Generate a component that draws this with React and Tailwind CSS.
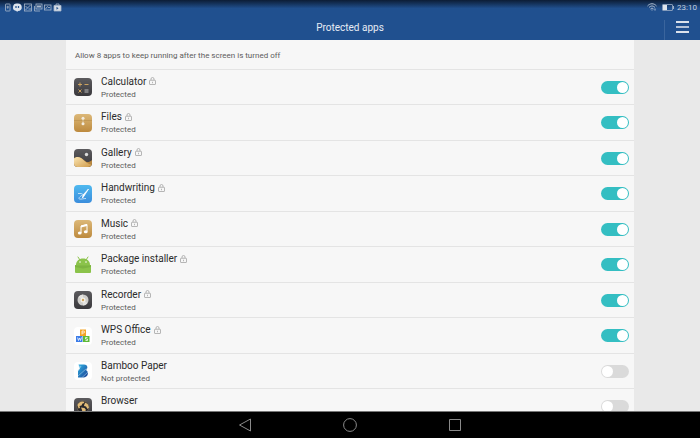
import React, { useState } from 'react';

const initialApps = [
  { id: 'calculator', name: 'Calculator', icon: CalculatorIcon, locked: true, enabled: true },
  { id: 'files', name: 'Files', icon: FilesIcon, locked: true, enabled: true },
  { id: 'gallery', name: 'Gallery', icon: GalleryIcon, locked: true, enabled: true },
  { id: 'handwriting', name: 'Handwriting', icon: HandwritingIcon, locked: true, enabled: true },
  { id: 'music', name: 'Music', icon: MusicIcon, locked: true, enabled: true },
  { id: 'installer', name: 'Package installer', icon: InstallerIcon, locked: true, enabled: true },
  { id: 'recorder', name: 'Recorder', icon: RecorderIcon, locked: true, enabled: true },
  { id: 'wps', name: 'WPS Office', icon: WpsIcon, locked: true, enabled: true },
  { id: 'bamboo', name: 'Bamboo Paper', icon: BambooIcon, locked: false, enabled: false },
  { id: 'browser', name: 'Browser', icon: BrowserIcon, locked: false, enabled: false },
];

// Gradients shared by the launcher icons
function IconDefs() {
  return (
    <svg className="absolute h-0 w-0" aria-hidden="true">
      <defs>
        <linearGradient id="dark" x1="0" y1="0" x2="0" y2="1">
          <stop offset="0" stopColor="#5c5b5e" />
          <stop offset="1" stopColor="#39383c" />
        </linearGradient>
        <linearGradient id="gold" x1="0" y1="0" x2="0" y2="1">
          <stop offset="0" stopColor="#dcb878" />
          <stop offset="1" stopColor="#bd8a3e" />
        </linearGradient>
        <linearGradient id="sand" x1="0" y1="0" x2="1" y2="1">
          <stop offset="0" stopColor="#fbe6b4" />
          <stop offset="1" stopColor="#cf9a48" />
        </linearGradient>
        <linearGradient id="sky" x1="0" y1="0" x2="0" y2="1">
          <stop offset="0" stopColor="#4fb9ef" />
          <stop offset="1" stopColor="#3b8ddc" />
        </linearGradient>
        <linearGradient id="bamboo" x1="0" y1="0" x2="1" y2="1">
          <stop offset="0" stopColor="#2eb2e4" />
          <stop offset="1" stopColor="#1d3f94" />
        </linearGradient>
      </defs>
    </svg>
  );
}

function Tile({ fill, children }) {
  return (
    <svg viewBox="0 0 36 36" className="h-[18px] w-[18px] shrink-0" aria-hidden="true">
      <rect width="36" height="36" rx="8" fill={fill} />
      {children}
    </svg>
  );
}

function CalculatorIcon() {
  return (
    <Tile fill="url(#dark)">
      <path d="M8 13h8M12 9v8M9 23l6 6M15 23l-6 6" stroke="#d9ab62" strokeWidth="1.8" />
      <path d="M21 13h8" stroke="#d9ab62" strokeWidth="1.8" />
      <path d="M21 24h8M21 28h8" stroke="#c9c9c9" strokeWidth="1.8" />
    </Tile>
  );
}

function FilesIcon() {
  return (
    <Tile fill="url(#gold)">
      <path d="M0 13h36" stroke="#b58a48" strokeWidth="1" />
      <path d="M18 9v11" stroke="#d9c49c" strokeWidth="2" />
      <circle cx="18" cy="8.5" r="3" fill="#f3ece0" />
      <circle cx="18" cy="19.5" r="3" fill="#f3ece0" />
    </Tile>
  );
}

function GalleryIcon() {
  return (
    <Tile fill="url(#dark)">
      <circle cx="25" cy="11" r="3.4" fill="#dcdcdc" />
      <path d="M0 19c4-4 9-4 14-1 7 4 9 8 13 8 3 0 6-1 9-4v6a8 8 0 0 1-8 8H8a8 8 0 0 1-8-8z" fill="#b98840" />
      <path d="M0 19c4-4 9-4 14-1 6 4 11 12 21 13a8 8 0 0 1-7 5H8a8 8 0 0 1-8-8z" fill="url(#sand)" />
    </Tile>
  );
}

function HandwritingIcon() {
  return (
    <Tile fill="url(#sky)">
      <path d="M29 8 20 22l-3 4 1-6z" fill="#fff" stroke="#fff" strokeWidth="1.6" />
      <path d="M8 17h7c3 0 2 3-1 5s-6 5-3 6 8-1 13-1" fill="none" stroke="#d4e9fa" strokeWidth="1.7" />
    </Tile>
  );
}

function MusicIcon() {
  return (
    <Tile fill="url(#gold)">
      <path d="M14 26V12l12-3v14" fill="none" stroke="#fff" strokeWidth="2" />
      <path d="M14 11l12-3v4l-12 3z" fill="#fff" />
      <ellipse cx="11.5" cy="26" rx="3.8" ry="3" fill="#fff" />
      <ellipse cx="23.5" cy="23.5" rx="3.8" ry="3" fill="#fff" />
    </Tile>
  );
}

function InstallerIcon() {
  return (
    <svg viewBox="0 0 36 36" className="h-[18px] w-[18px] shrink-0" aria-hidden="true">
      <path d="M8 2l4 6M28 2l-4 6" stroke="#8bc34a" strokeWidth="2" strokeLinecap="round" />
      <path d="M4 18C4 10 10 5 18 5s14 5 14 13z" fill="#8bc34a" />
      <circle cx="12" cy="12" r="1.6" fill="#fff" />
      <circle cx="24" cy="12" r="1.6" fill="#fff" />
      <path d="M2 18h32v14a2 2 0 0 1-2 2H4a2 2 0 0 1-2-2z" fill="#8bc34a" />
      <path d="M2 19h32v3L18 25 2 22z" fill="#7db441" />
    </svg>
  );
}

function RecorderIcon() {
  return (
    <Tile fill="url(#dark)">
      <circle cx="18" cy="18" r="11" fill="#cfcecb" />
      <path d="M18 18 9 12a11 11 0 0 1 9-5zM18 18l9 6a11 11 0 0 1-9 5z" fill="#e4e3e0" />
      <circle cx="18" cy="18" r="5" fill="#f5f2ea" />
      <circle cx="18" cy="18" r="2.4" fill="#cfa45c" />
    </Tile>
  );
}

function WpsIcon() {
  return (
    <Tile fill="#fff">
      <rect x="12" y="5" width="12" height="13" fill="#f3a325" />
      <rect x="4" y="18" width="13" height="12" fill="#3d7de8" />
      <rect x="18" y="18" width="13" height="12" fill="#5cba36" />
      <path d="M16 15V8h3a2 2 0 0 1 0 4h-3M7 21l2 6 2-5 2 5 2-6M27 21h-4v3h4v3h-4" fill="none" stroke="#fff" strokeWidth="1.5" />
    </Tile>
  );
}

function BambooIcon() {
  return (
    <Tile fill="#fff">
      <path d="M9 5h11c7 0 9 7 4 11 7 4 4 15-5 15H8V18l4-5z" fill="url(#bamboo)" />
      <path d="M8 17 14 9 9 8M8 28l17-15M15 32l13-12" fill="none" stroke="#b9e2f5" strokeWidth="1" />
    </Tile>
  );
}

function BrowserIcon() {
  return (
    <Tile fill="url(#dark)">
      <circle cx="18" cy="18" r="12" fill="#29282b" stroke="#8f7c5c" strokeWidth="1" />
      <path d="M7 14c2-5 7-8 12-7l2 3-4 1-2 4-4 1 1 4-3 1zM23 9l5 4 2 6-3 3-3-5-4-1 1-4zM14 19l7 1 3 4-4 5h-3l-1-5z" fill="#e3bd79" />
    </Tile>
  );
}

function LockIcon() {
  return (
    <svg viewBox="0 0 14 16" className="h-2 w-[7px] shrink-0" fill="none" stroke="#a5a5a5" strokeWidth="1.6" aria-label="Locked">
      <rect x="1" y="6.5" width="12" height="8.5" rx="1" />
      <path d="M4 6V4a3 3 0 0 1 6 0v2M7 9.5v3" />
    </svg>
  );
}

function NotificationIcons() {
  return (
    <svg viewBox="0 0 116 18" className="h-[9px] w-[58px]" fill="none" stroke="#a9b7ca" strokeWidth="1.6" aria-hidden="true">
      <rect x="3" y="2" width="9" height="14" rx="1" />
      <path d="M7.5 5.5v6M5 8h5" />
      <path d="M27 1a8 7.5 0 0 1 1 15l-2 2-1-2a8 7.5 0 0 1 2-15z" fill="#dde4ed" stroke="none" />
      <path d="M24 6v4M29 6v4" stroke="#27548e" strokeWidth="2.5" />
      <rect x="41" y="2" width="14" height="14" />
      <path d="M43 14l10-10M43 6l4 4M49 12h5" />
      <path d="M61 6v10h11" />
      <rect x="64" y="2" width="12" height="10" />
      <path d="M66 7h8" strokeWidth="4" />
      <rect x="81" y="4" width="13" height="10" />
      <path d="M83 12l4-5 3 3 2-2" />
      <path d="M100 5h14v11h-14z" fill="#d5dce6" />
      <path d="M104 5V2h6v3" />
      <path d="M105 7.5v6l4-3z" fill="#27548e" stroke="none" />
    </svg>
  );
}

function StatusBar() {
  return (
    <div className="flex h-[14px] items-center justify-between bg-linear-to-b from-[#0c1d36] to-[#20508f] to-60% pr-[3px] pl-1">
      <NotificationIcons />
      <div className="flex items-center gap-[3px] text-[#c3cedd]">
        <svg viewBox="0 0 20 16" className="mr-0.5 h-2 w-2.5" fill="none" stroke="currentColor" strokeWidth="1.8" aria-label="Wi-Fi">
          <path d="M1 6c5-6 13-6 18 0M4 9c4-4 8-4 12 0M7 12c2-2 4-2 6 0" />
          <path d="M10 15v-2M16 11v4" />
        </svg>
        <svg viewBox="0 0 24 14" className="h-[7px] w-3" aria-label="Battery">
          <rect x="1" y="1" width="20" height="12" rx="1" fill="none" stroke="#9dafc7" strokeWidth="1.6" />
          <path d="M2 2h8v10H2z" fill="#dfe5ed" />
          <path d="M23 4v6" stroke="#9dafc7" strokeWidth="2" />
        </svg>
        <span className="pt-px text-[8px] leading-none">23:10</span>
      </div>
    </div>
  );
}

function AppRow({ app, onToggle }) {
  const Icon = app.icon;
  return (
    <li className="border-b border-[#e4e4e4] odd:h-[35px] even:h-9">
      <label htmlFor={app.id} className="flex h-full items-center pr-[5px] pl-2">
        <Icon />
        <div className="ml-[9px] flex-1 pt-px">
          <div className="flex items-center gap-[3px]">
            <span className="text-[10px] leading-[13px] text-[#2b2b2b]">{app.name}</span>
            {app.locked && <LockIcon />}
          </div>
          <p className="text-[8px] leading-[13px] text-[#5c5c5c]">{app.enabled ? 'Protected' : 'Not protected'}</p>
        </div>
        <input
          id={app.id}
          type="checkbox"
          role="switch"
          checked={app.enabled}
          onChange={() => onToggle(app.id)}
          className="flex h-[13px] w-7 appearance-none items-center rounded-full bg-[#dadada] px-px before:h-[11px] before:w-[11px] before:rounded-full before:bg-white before:content-[''] checked:justify-end checked:bg-[#34bec2]"
        />
      </label>
    </li>
  );
}

export default function App() {
  const [apps, setApps] = useState(initialApps);

  const handleToggle = (id) => {
    setApps(apps.map((app) => (app.id === id ? { ...app, enabled: !app.enabled } : app)));
  };

  return (
    <div className="flex h-screen flex-col overflow-hidden bg-[#e9e9e9] font-['Roboto',sans-serif]">
      <IconDefs />
      <header className="shrink-0 bg-[#20508f]">
        <StatusBar />
        <div className="grid h-[26px] grid-cols-[1fr_auto_1fr] items-center">
          <h1 className="col-start-2 text-[10px] text-[#e6ecf4]">Protected apps</h1>
          <button
            type="button"
            aria-label="Menu"
            className="flex h-5 w-9 flex-col items-center justify-center gap-[3px] self-end justify-self-end border-l border-[#3a659d] pb-[6px]"
          >
            <span className="h-[2px] w-[13px] bg-[#dbe2ec]" />
            <span className="h-[2px] w-[13px] bg-[#b4c3d8]" />
            <span className="h-[2px] w-[13px] bg-[#dbe2ec]" />
          </button>
        </div>
      </header>

      <main className="mx-[66px] min-h-0 flex-1 overflow-hidden bg-[#f7f7f7]">
        <p className="flex h-[30px] items-center border-b border-[#e4e4e4] px-[9px] pt-[2px] text-[8px] text-[#5c5c5c]">
          Allow 8 apps to keep running after the screen is turned off
        </p>
        <ul>
          {apps.map((app) => (
            <AppRow key={app.id} app={app} onToggle={handleToggle} />
          ))}
        </ul>
      </main>

      <nav className="flex h-[27px] shrink-0 items-center justify-center gap-[91px] border-t border-[#777] bg-black text-[#8a8a8a]">
        <button type="button" aria-label="Back">
          <svg viewBox="0 0 14 14" className="h-3.5 w-3.5" fill="none" stroke="currentColor">
            <path d="M12.5 1v12L1.5 7z" />
          </svg>
        </button>
        <button type="button" aria-label="Home">
          <svg viewBox="0 0 14 14" className="h-3.5 w-3.5" fill="none" stroke="currentColor">
            <circle cx="7" cy="7" r="6.4" />
          </svg>
        </button>
        <button type="button" aria-label="Recent apps">
          <svg viewBox="0 0 14 14" className="h-3.5 w-3.5" fill="none" stroke="currentColor">
            <path d="M1.5 1.5h11v11h-11z" />
          </svg>
        </button>
      </nav>
    </div>
  );
}
